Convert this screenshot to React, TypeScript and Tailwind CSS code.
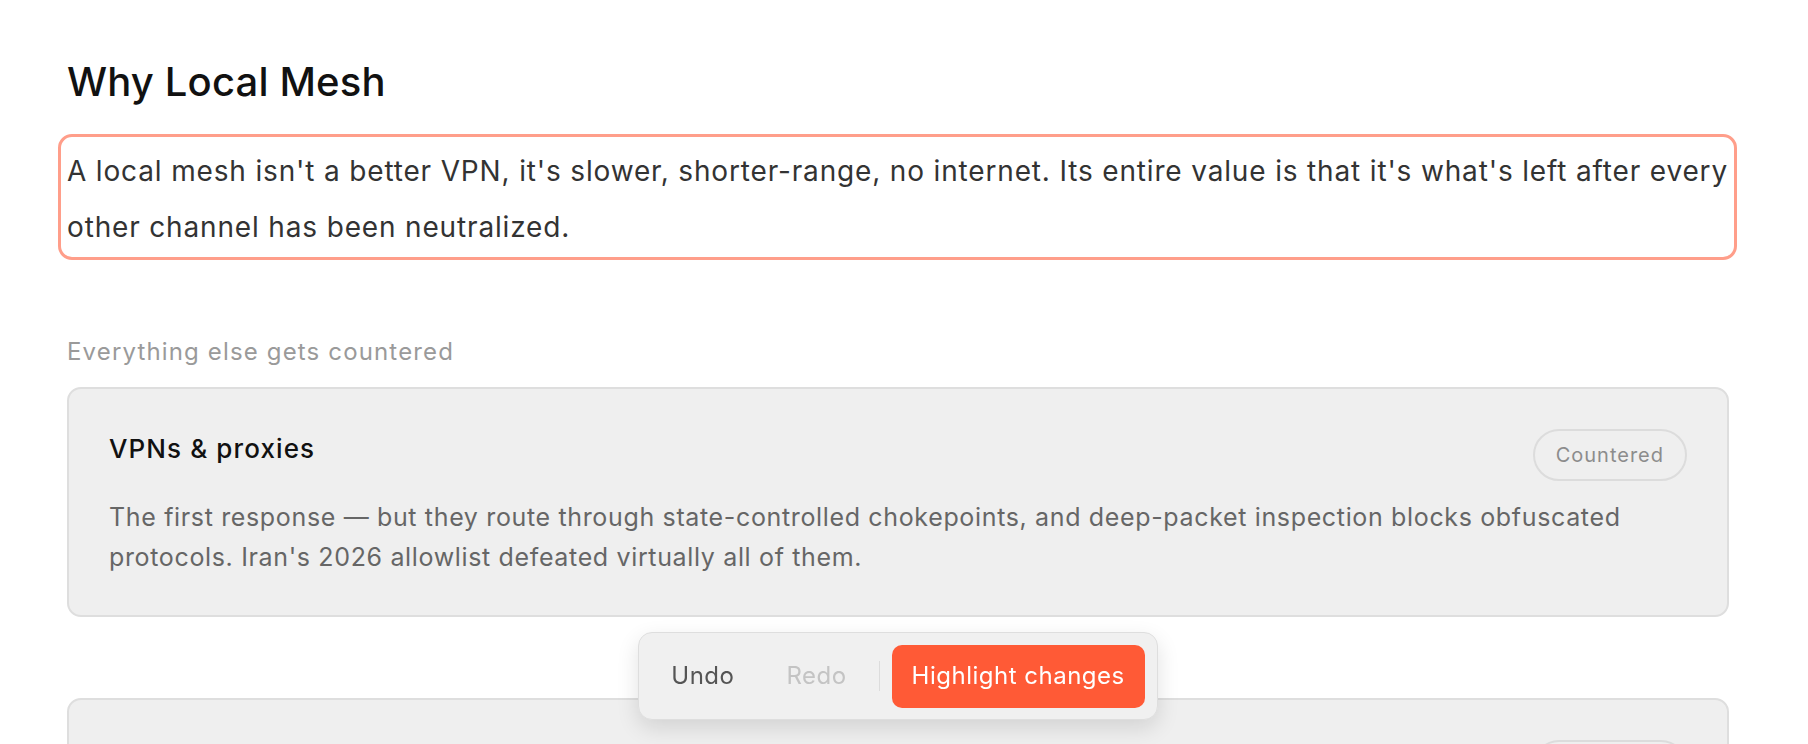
import React from "react";

const font = { fontFamily: "Inter, 'Noto Sans', sans-serif" };

function Card({ title, desc }: { title: string; desc: string }) {
  return (
    <div className="rounded-[14px] border-2 border-[#dedede] bg-[#efefef] px-[40px] pt-[40px] pb-[38px]">
      <div className="flex items-start justify-between gap-6">
        <h3 className="text-[26px] leading-[39px] font-medium text-[#111] tracking-[1.1px]">{title}</h3>
        <span className="flex h-[52px] items-center rounded-full border-2 border-[#dcdcdc] px-[21px] text-[20px] tracking-[1px] text-[#8c8c8c]">
          Countered
        </span>
      </div>
      <p className="mt-[16px] text-[25px] leading-[40px] tracking-[0.65px] text-[#666]">{desc}</p>
    </div>
  );
}

export default function App() {
  return (
    <div className="min-h-screen bg-white" style={font}>
      <div className="ml-[67px] w-[1662px] pt-[58px] pb-[200px]">
        <h1 className="text-[40px] leading-[48px] font-medium text-[#111] tracking-[0.15px]">Why Local Mesh</h1>
        <div className="mt-[28px] -ml-[9px] -mr-[8px] rounded-[14px] border-[3px] border-[#ff9e8a] pt-[6px] pb-[2px] pl-[6px] pr-[5px]">
          <p className="text-[28px] leading-[56px] tracking-[0.84px] text-[#333]">
            A local mesh isn't a better VPN, it's slower, shorter-range, no internet. Its entire value is that it's what's left after every other channel has been neutralized.
          </p>
        </div>
        <div className="mt-[74px] text-[24px] leading-[36px] tracking-[1.15px] text-[#9a9a9a]">Everything else gets countered</div>
        <div className="mt-[17px] flex flex-col gap-[81px]">
          <Card
            title="VPNs & proxies"
            desc="The first response — but they route through state-controlled chokepoints, and deep-packet inspection blocks obfuscated protocols. Iran's 2026 allowlist defeated virtually all of them."
          />
          <Card
            title="Satellite internet"
            desc="Terminals are expensive, conspicuous and easy to detect; owning one becomes the crime, and jamming degrades the rest."
          />
        </div>
      </div>
      <div className="fixed bottom-[24px] left-[67px] flex w-[1662px] justify-center">
        <div className="flex h-[88px] items-center gap-3 rounded-[14px] border border-[#dedede] bg-[#f0f0f0] px-3 shadow-[0_8px_22px_rgba(0,0,0,0.12)]">
          <button className="h-[63px] px-[20px] text-[24px] tracking-[0.5px] text-[#555]">Undo</button>
          <button className="h-[63px] px-[20px] text-[24px] tracking-[0.5px] text-[#c4c4c4]">Redo</button>
          <div className="h-[30px] w-px bg-[#dcdcdc]" />
          <button className="h-[63px] rounded-[10px] bg-[#ff5a36] px-[20px] text-[24px] tracking-[0.5px] text-white">Highlight changes</button>
        </div>
      </div>
    </div>
  );
}
